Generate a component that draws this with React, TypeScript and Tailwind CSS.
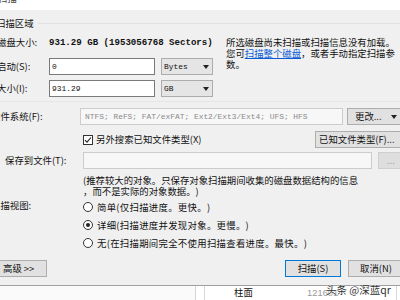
import React from 'react';

const mono = "font-['Liberation_Mono',monospace]";

function Arrow() {
  return (
    <svg width="6" height="4" viewBox="0 0 6 4" className="shrink-0">
      <path d="M0 0h6L3 4z" fill="#222" />
    </svg>
  );
}

function Select({ value }: { value: string }) {
  return (
    <div className="ml-[6px] flex h-[17px] w-[52px] items-center border border-[#acacac] bg-[#e5e5e5] pl-[2px] pr-[3px]">
      <span className={`${mono} flex-1 text-[7.9px]`}>{value}</span>
      <Arrow />
    </div>
  );
}

function Radio({ checked = false }: { checked?: boolean }) {
  return (
    <div className="flex h-[10px] w-[10px] shrink-0 items-center justify-center rounded-full border border-[#333] bg-white">
      {checked && <div className="h-[4px] w-[4px] rounded-full bg-[#222]" />}
    </div>
  );
}

export default function App() {
  return (
    <div className="relative h-[300px] w-[400px] overflow-hidden bg-[#f0f0f0] font-['Noto_Sans_CJK_SC',sans-serif] text-[9.4px] leading-[11px] text-[#111] [text-spacing-trim:space-all]">
      {/* title strip */}
      <div className="h-[10px] overflow-hidden bg-white">
        <div className="ml-[-2px] mt-[-7px] text-[#444]">扫描</div>
      </div>

      {/* group header */}
      <div className="mt-[8px] flex h-[11px] items-center">
        <span className="ml-[-4px]">扫描区域</span>
        <div className="ml-[4px] flex-1 border-t border-[#e2e2e2]" />
      </div>

      <div className="mt-[7px] flex">
        <div className="w-[222px] shrink-0">
          <div className="flex h-[12px] items-center">
            <span className="ml-[-3px] w-[52px] shrink-0">磁盘大小:</span>
            <span className={`${mono} whitespace-nowrap text-[9.1px] font-bold`}>
              931.29 GB (1953056768 Sectors)
            </span>
          </div>
          <div className="mt-[10px] flex h-[17px] items-center">
            <span className="ml-[-3px] w-[52px] shrink-0">启动(S):</span>
            <div className={`${mono} flex h-[17px] w-[106px] items-center border border-[#7a7a7a] bg-white pl-[2px] text-[7.9px]`}>
              0
            </div>
            <Select value="Bytes" />
          </div>
          <div className="mt-[5px] flex h-[17px] items-center">
            <span className="ml-[-3px] w-[52px] shrink-0">大小(I):</span>
            <div className={`${mono} flex h-[17px] w-[106px] items-center border border-[#7a7a7a] bg-white pl-[2px] text-[7.9px]`}>
              931.29
            </div>
            <Select value="GB" />
          </div>
        </div>
        <div className="ml-[4px] w-[174px] shrink-0 pt-[1px] leading-[11px]">
          所选磁盘尚未扫描或扫描信息没有加载。
          <br />
          您可<span className="text-[#0a5bd6] underline">扫描整个磁盘</span>，或者手动指定扫描参
          <br />
          数。
        </div>
      </div>

      <div className="mt-[4px] h-px bg-[#e6e6e6]" />

      {/* file system */}
      <div className="mt-[6px] flex h-[17px] items-center">
        <span className="ml-[-9px] w-[89px] shrink-0 whitespace-nowrap">文件系统(F):</span>
        <div className={`${mono} flex h-[17px] w-[263px] shrink-0 items-center overflow-hidden whitespace-nowrap border border-[#cccccc] bg-[#f7f7f7] pl-[4px] text-[7.9px] text-[#8a8a8a]`}>
          NTFS; ReFS; FAT/exFAT; Ext2/Ext3/Ext4; UFS; HFS
        </div>
        <div className="ml-[4px] flex h-[17px] w-[60px] shrink-0 items-center border border-[#adadad] bg-[#e1e1e1] pl-[7px] pr-[9px]">
          <span className="flex-1">更改...</span>
          <Arrow />
        </div>
      </div>

      {/* checkbox row */}
      <div className="mt-[6px] flex h-[17px] items-center">
        <div className="ml-[83px] flex h-[10px] w-[10px] shrink-0 items-center justify-center border border-[#333] bg-white">
          <svg width="8" height="8" viewBox="0 0 8 8">
            <path d="M1 4.2l2 2L7 1.5" stroke="#222" strokeWidth="1.1" fill="none" />
          </svg>
        </div>
        <span className="ml-[3px] w-[219px] shrink-0 whitespace-nowrap">另外搜索已知文件类型(X)</span>
        <div className="flex h-[17px] w-[90px] shrink-0 items-center whitespace-nowrap border border-[#adadad] bg-[#e1e1e1] pl-[3px]">
          已知文件类型(F)...
        </div>
      </div>

      {/* save to file */}
      <div className="mt-[4px] flex h-[17px] items-center">
        <span className="ml-[5px] w-[78px] shrink-0 whitespace-nowrap">保存到文件(T):</span>
        <div className="h-[17px] w-[289px] shrink-0 border border-[#cccccc] bg-[#f7f7f7]" />
        <div className="ml-[6px] flex h-[17px] w-[28px] shrink-0 items-center border border-[#cfcfcf] bg-[#dedede] pl-[8px] text-[#9a9a9a]">
          ...
        </div>
      </div>

      {/* note */}
      <div className="ml-[83px] mt-[6px] whitespace-nowrap">
        (推荐较大的对象。只保存对象扫描期间收集的磁盘数据结构的信息
        <br />
        ，而不是实际的对象数据。)
      </div>

      {/* scan view */}
      <div className="mt-[1px] flex">
        <span className="ml-[-9px] mt-[2px] w-[92px] shrink-0">扫描视图:</span>
        <div className="flex flex-col">
          <div className="flex h-[18px] items-center gap-[4px]">
            <Radio />
            <span className="tracking-[0.3px]">简单(仅扫描进度。更快。)</span>
          </div>
          <div className="flex h-[18px] items-center gap-[4px]">
            <Radio checked />
            <span className="tracking-[0.3px]">详细(扫描进度并发现对象。更慢。)</span>
          </div>
          <div className="flex h-[18px] items-center gap-[4px]">
            <Radio />
            <span className="tracking-[0.3px]">无(在扫描期间完全不使用扫描查看进度。最快。)</span>
          </div>
        </div>
      </div>

      {/* buttons */}
      <div className="mt-[8px] flex h-[17px]">
        <div className="ml-[-8px] flex w-[55px] shrink-0 items-center border border-[#adadad] bg-[#e1e1e1] pl-[10px]">
          高级 &gt;&gt;
        </div>
        <div className="ml-[238px] flex w-[56px] shrink-0 items-center justify-center border border-[#0078d7] bg-[#e1e1e1]">
          扫描(S)
        </div>
        <div className="ml-[7px] flex w-[56px] shrink-0 items-center justify-center border border-[#adadad] bg-[#e1e1e1]">
          取消(N)
        </div>
      </div>

      {/* table below dialog */}
      <div className="mt-[8px] flex h-[20px] border-t border-[#a0a0a0] bg-white">
        <div className="w-[196px] shrink-0 border-r border-[#d6d6d6] bg-[#fafafa]" />
        <div className="w-[9px] shrink-0 border-r border-[#d6d6d6]" />
        <div className="w-[102px] shrink-0 pl-[29px] pt-[1px]">柱面</div>
        <div className="w-[90px] shrink-0 border-r border-[#d6d6d6] pt-[1px] font-['Liberation_Sans',sans-serif] text-[#9a9a9a]">
          121601
        </div>
      </div>

      {/* watermark */}
      <div className="absolute left-[326px] top-[283px] whitespace-nowrap text-[10.5px] leading-[13px] text-[#333] [text-shadow:0_0_2px_#fff]">
        头条 @深蓝qr
      </div>
    </div>
  );
}
